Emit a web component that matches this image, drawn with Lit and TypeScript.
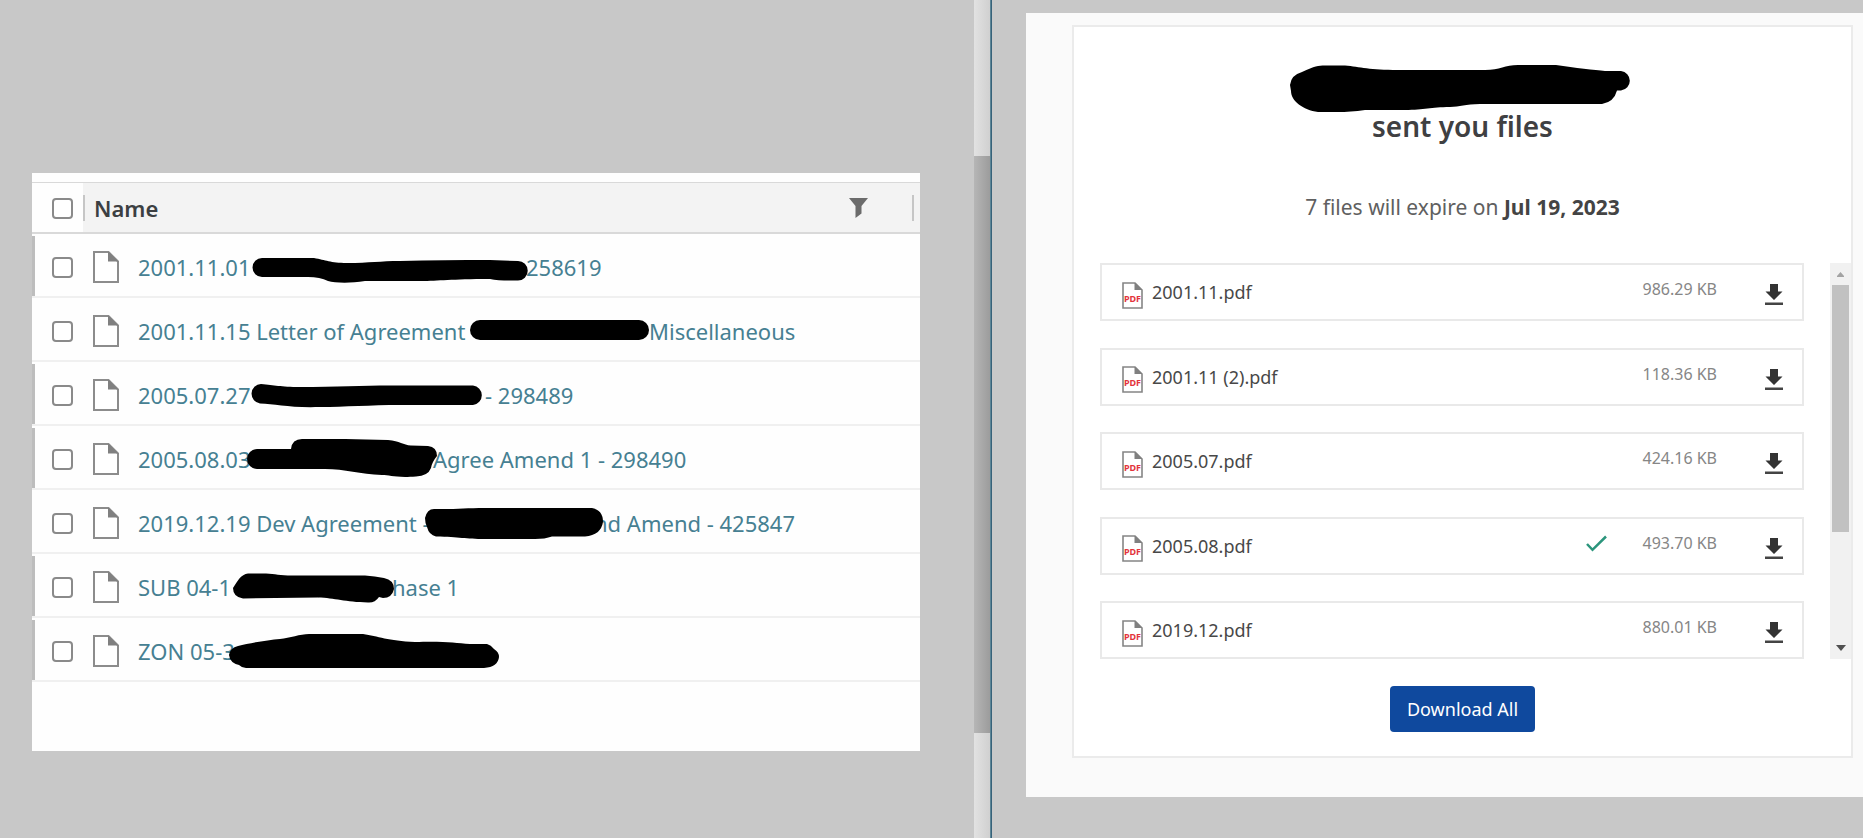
import { LitElement, html, svg, css, nothing } from "lit";
import { customElement } from "lit/decorators.js";

interface Doc {
  before: string;
  after: string;
  // distance from the start of the name to the start of its second part
  offset: number;
  mark: string;
  bar: boolean;
}

const DOCS: Doc[] = [
  {
    before: "2001.11.01", after: "258619", offset: 388, bar: true,
    mark: "M262 258H314C326 260 330 263 347 263C370 263 380 261 400 261C430 260 460 260 490 260L518 261A9.7 9.7 0 0 1 518 280.500Q500 281 490 279C450 279 440 281 420 281H365C350 283.500 335 283 328 281Q320 277 308 277H262A9.500 9.500 0 0 1 262 258Z",
  },
  {
    before: "2001.11.15 Letter of Agreement", after: "Miscellaneous", offset: 511, bar: false,
    mark: "M480 320H639A10 10 0 0 1 639 340H480A10 10 0 0 1 480 320Z",
  },
  {
    before: "2005.07.27", after: "- 298489", offset: 347, bar: true,
    mark: "M261 384C275 385 280 387 300 387C340 387 370 385 400 385.500H473A9.800 9.800 0 0 1 473 405H400C370 405 345 407 320 407C290 408 275 404 260 403.500A9.800 9.800 0 0 1 261 384Z",
  },
  {
    before: "2005.08.03", after: "Agree Amend 1 - 298490", offset: 295, bar: true,
    mark: "M257 449H291Q292 439 302 439H345L388 440C400 441 403 445 411 445.500L428 446Q437 447 437 456Q432 462 431 468Q428 476 416 476.500C395 478 390 475 382 475C360 474 345 469 325 469H257A10 10 0 0 1 257 449Z",
  },
  {
    before: "2019.12.19 Dev Agreement -", after: "nd Amend - 425847", offset: 456, bar: false,
    mark: "M434 509C455 509.500 465 508 485 508H592Q603 510 603 522Q601 535 585 536.500H552Q545 539 535 539H485C465 539 460 537 436 536.500Q429 535 427 527Q425 523 425 518Q427 509 434 509Z",
  },
  {
    before: "SUB 04-1", after: "hase 1", offset: 254, bar: true,
    mark: "M248 573.500H266C275 574 280 575.500 292 575.500H365Q375 576 384 578Q394 580 394 589Q392 598 383 598L379 597Q375 603 368 602.500C345 602 335 598 318 597.500L243 598.500Q233 597 233 588Q236 583 239 579Q243 574 248 573.500Z",
  },
  {
    before: "ZON 05-3", after: "", offset: 340, bar: true,
    mark: "M238 646C250 643 268 640 280 639C290 638 300 634 309 634H363C378 636 388 641 415 642C445 641 455 643 470 644H487Q491 645 494 649Q499 652 499 657Q498 667 484 668H246Q242 668 239 665Q230 663 229 655Q230 648 238 646Z",
  },
];

const FILES = [
  { name: "2001.11.pdf", size: "986.29 KB", done: false },
  { name: "2001.11 (2).pdf", size: "118.36 KB", done: false },
  { name: "2005.07.pdf", size: "424.16 KB", done: false },
  { name: "2005.08.pdf", size: "493.70 KB", done: true },
  { name: "2019.12.pdf", size: "880.01 KB", done: false },
];

const page = svg`
  <path d="M1 1H15.500L25 10.500V31H1Z" fill="#fff" stroke="#8c8c8c" stroke-width="2"/>
  <path d="M15 1H16L25.500 10.500H15Z" fill="#808080"/>`;

@customElement("document-list")
export class DocumentList extends LitElement {
  static styles = css`
    :host { display: block; background: #fefefe; padding: 9px 0 69px; }
    .table { width: 100%; border-collapse: separate; border-spacing: 0; table-layout: fixed; }
    .check-col { width: 51px; }
    .head { height: 52px; box-sizing: border-box; padding: 0; border-top: 1px solid #d9d9d9; border-bottom: 2px solid #d9d9d9; text-align: left; }
    .head-name { background: #f3f3f3; }
    .head-inner { display: flex; align-items: center; height: 26px; margin-right: 6px; padding: 0 44px 0 9px; border-left: 2px solid #c6c6c6; border-right: 2px solid #c6c6c6; font-size: 22px; line-height: 26px; font-weight: 600; color: #3c3f42; }
    .title { flex: 1; }
    .filter { display: flex; padding: 0; border: 0; background: none; }
    .cell { height: 64px; box-sizing: border-box; padding: 2px 0 0; border-bottom: 2px solid #f0f0f0; }
    .name-cell { position: relative; padding-top: 4px; }
    .pick { display: flex; align-items: center; box-sizing: border-box; height: 60px; padding: 2px 0 0 17px; border-left: 3px solid transparent; }
    .bar { border-left-color: #bdbdbd; }
    .head-pick { height: 46px; }
    .box { appearance: none; box-sizing: border-box; width: 21px; height: 21px; margin: 0; border: 2px solid #8a8a8a; border-radius: 4px; background: #fff; }
    .box:checked { background: #3f7f94; }
    .doc { display: flex; align-items: center; gap: 19px; padding-left: 10px; }
    .link { display: flex; color: #468092; font-size: 22px; line-height: 30px; text-decoration: none; white-space: nowrap; }
    .mark { position: absolute; left: 0; top: 0; overflow: visible; pointer-events: none; }
  `;

  render() {
    return html`
      <table class="table">
        <colgroup><col class="check-col" /><col /></colgroup>
        <thead>
          <tr>
            <th class="head"><div class="pick head-pick"><input class="box" type="checkbox" aria-label="Select all" /></div></th>
            <th class="head head-name">
              <div class="head-inner">
                <span class="title">Name</span>
                <button class="filter" aria-label="Filter">
                  <svg width="19" height="20" viewBox="0 0 19 20"><path d="M0 0H19L12.500 8V15.500L6.500 20V8Z" fill="#6b6b6b"/></svg>
                </button>
              </div>
            </th>
          </tr>
        </thead>
        <tbody>
          ${DOCS.map((d, i) => html`
            <tr>
              <td class="cell"><div class="pick ${d.bar ? "bar" : ""}"><input class="box" type="checkbox" aria-label=${d.before} /></div></td>
              <td class="cell name-cell">
                <div class="doc">
                  <svg width="26" height="32" viewBox="0 0 26 32">${page}</svg>
                  <a class="link" href="#"><span style="width:${d.offset}px">${d.before}</span><span>${d.after}</span></a>
                </div>
                <svg class="mark" width="500" height="64" viewBox="83 ${234 + 64 * i} 500 64" aria-hidden="true"><path d=${d.mark}/></svg>
              </td>
            </tr>`)}
        </tbody>
      </table>`;
  }
}

@customElement("shared-files")
export class SharedFiles extends LitElement {
  static styles = css`
    :host { display: flex; flex-direction: column; align-items: center; background: #fff; border: 2px solid #ebebeb; padding: 38px 0 24px; }
    .sender { display: block; }
    .title { margin: 0; font-size: 28px; line-height: 28px; font-weight: 600; color: #3f4042; }
    .expiry { margin: 53px 0 42px; font-size: 21px; line-height: 28px; color: #606060; }
    .date { font-weight: 700; color: #444; }
    .scroller { align-self: stretch; display: flex; height: 396px; padding-left: 26px; gap: 26px; }
    .list { flex: 1; display: flex; flex-direction: column; justify-content: space-between; margin: 0; padding: 0; list-style: none; }
    .file { display: flex; align-items: center; height: 58px; box-sizing: border-box; border: 2px solid #e9e9e9; padding: 0 19px 0 20px; }
    .icon { margin-top: 6px; }
    .name { flex: 1; padding-left: 9px; font-size: 18px; line-height: 24px; color: #484848; }
    .done { margin: 0 35px 5px 0; }
    .size { margin-bottom: 6px; font-size: 16px; line-height: 22px; color: #868686; }
    .get { display: flex; margin: 6px 0 0 48px; padding: 0; border: 0; background: none; }
    .track { display: flex; flex-direction: column; align-items: center; justify-content: space-between; width: 21px; background: #f1f1f1; }
    .arrow { display: flex; align-items: center; justify-content: center; height: 22px; }
    .thumb { width: 17px; height: 247px; margin-bottom: auto; background: #c1c1c1; }
    .all { margin-top: 27px; height: 46px; padding: 0 17px; border: 0; border-radius: 4px; background: #0f499e; color: #fff; font: 18px/24px "Noto Sans", "Open Sans", sans-serif; }
  `;

  render() {
    return html`
      <svg class="sender" width="347" height="47" viewBox="1289 65 347 47" aria-hidden="true">
        <path d="M1290 85Q1291 75 1302 72C1315 66 1318 65.500 1325 65.500H1345C1360 67 1370 70 1398 70H1485C1500 70 1505 65 1518 65H1556C1575 68 1595 70 1605 71H1621A9.800 9.800 0 0 1 1621 90.500H1617Q1614 102 1602 104H1480C1465 104 1460 107 1450 107C1430 107 1425 110 1405 110H1365Q1350 112 1338 112H1318C1303 110 1291 101 1291 91Z"/>
      </svg>
      <h1 class="title">sent you files</h1>
      <p class="expiry">7 files will expire on <span class="date">Jul 19, 2023</span></p>
      <div class="scroller">
        <ul class="list">
          ${FILES.map((f) => html`
            <li class="file">
              <svg class="icon" width="21" height="27" viewBox="0 0 21 27">
                <path d="M1 1H13L20 8V26H1Z" fill="#fff" stroke="#858585" stroke-width="1.600"/>
                <path d="M12.500 1H13.500L20.500 8H12.500Z" fill="#808080"/>
                <text x="10.500" y="20" text-anchor="middle" font-family="Noto Sans" font-size="9" font-weight="700" fill="#e3343c">PDF</text>
              </svg>
              <span class="name">${f.name}</span>
              ${f.done ? html`<svg class="done" width="21" height="17" viewBox="0 0 21 17"><path d="M1 9L6.500 14.800L20 1.500" fill="none" stroke="#2b957c" stroke-width="2.500"/></svg>` : nothing}
              <span class="size">${f.size}</span>
              <button class="get" aria-label="Download ${f.name}">
                <svg width="18" height="22" viewBox="0 0 18 22"><path d="M5 0H13V7.500H17.500L9 16L0.500 7.500H5Z" fill="#333"/><path d="M0 18.500H18V21H0Z" fill="#444"/></svg>
              </button>
            </li>`)}
        </ul>
        <div class="track" aria-hidden="true">
          <span class="arrow"><svg width="7" height="5" viewBox="0 0 7 5"><path d="M0 5V4L3.500 0L7 4V5Z" fill="#a3a3a3"/></svg></span>
          <span class="thumb"></span>
          <span class="arrow"><svg width="10" height="6" viewBox="0 0 10 6"><path d="M0 0H10L5 6Z" fill="#505050"/></svg></span>
        </div>
      </div>
      <button class="all">Download All</button>`;
  }
}

@customElement("app-root")
export class AppRoot extends LitElement {
  static styles = css`
    :host { display: grid; grid-template-columns: 974fr 16px 2px 871fr; min-height: 100vh; background: #c8c8c8; font-family: "Noto Sans", "Open Sans", sans-serif; }
    .left { padding: 173px 54px 87px 32px; }
    .track { display: flex; flex-direction: column; background: linear-gradient(90deg, #e2e2e2, #d0d0d0); }
    .thumb { flex: 0 0 577px; margin-top: 156px; background: linear-gradient(90deg, #b6b6b6, #9c9c9c); }
    .edge { background: linear-gradient(90deg, #6f97a5, #24506a); }
    .right { padding: 13px 0 41px 34px; }
    .panel { background: #fafafa; padding: 12px 10px 39px 46px; }
  `;

  render() {
    return html`
      <section class="left"><document-list></document-list></section>
      <div class="track"><div class="thumb"></div></div>
      <div class="edge"></div>
      <section class="right"><div class="panel"><shared-files></shared-files></div></section>`;
  }
}
